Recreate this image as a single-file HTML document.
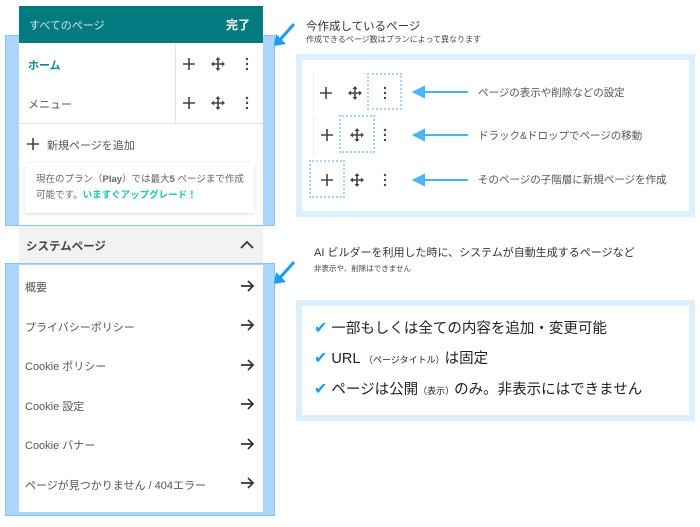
<!DOCTYPE html>
<html><head><meta charset="utf-8"><style>
*{margin:0;padding:0;box-sizing:border-box}
body{width:700px;height:527px;background:#fff;position:relative;overflow:hidden;font-family:"Liberation Sans","Noto Sans CJK JP",sans-serif;color:#444}
.a{position:absolute}
.blue{background:#aad5fc;border:1.5px dotted #6cb4f0}
.row{position:absolute;left:25px;font-size:11px;color:#555}
.note{font-size:10.5px;color:#555}
svg.i{position:absolute}
</style></head><body>
<svg width="0" height="0" style="position:absolute"><defs>
<g id="pl"><path d="M7 1V13M1 7H13" stroke="#444" stroke-width="1.6" fill="none"/></g>
<g id="mv"><path d="M7 1V13M1 7H13" stroke="#444" stroke-width="1.6"/><path d="M7 0L4.5 3H9.5ZM7 14L4.5 11H9.5ZM0 7L3 4.5V9.5ZM14 7L11 4.5V9.5Z" fill="#444"/></g>
<g id="dt"><circle cx="7" cy="2" r="1.2" fill="#444"/><circle cx="7" cy="7" r="1.2" fill="#444"/><circle cx="7" cy="12" r="1.2" fill="#444"/></g>
<g id="ar"><path d="M1 7H13M8 2L13 7L8 12" stroke="#333" stroke-width="1.7" fill="none"/></g>
</defs></svg>
<div class="a blue" style="left:5px;top:35px;width:270px;height:191px"></div>
<div class="a blue" style="left:5px;top:263px;width:270px;height:253px"></div>
<div class="a" style="left:19px;top:6px;width:244px;height:37px;background:#017a80"></div>
<div class="a" style="left:29px;top:17px;font-size:11px;color:#cfe9ea">すべてのページ</div>
<div class="a" style="left:226px;top:16px;font-size:12px;color:#fff;font-weight:bold">完了</div>
<div class="a" style="left:19px;top:43px;width:244px;height:182px;background:#fff"></div>
<div class="a" style="left:175px;top:43px;width:1px;height:80px;background:#e4e4e4"></div>
<div class="a" style="left:19px;top:123px;width:244px;height:1px;background:#e4e4e4"></div>
<div class="a" style="left:28px;top:57px;font-size:11px;color:#0a8c93;font-weight:bold">ホーム</div>
<div class="a" style="left:28px;top:96px;font-size:11px;color:#555">メニュー</div>
<svg class="i" style="left:182px;top:57px" width="14" height="14"><use href="#pl"/></svg>
<svg class="i" style="left:211px;top:57px" width="14" height="14"><use href="#mv"/></svg>
<svg class="i" style="left:240px;top:57px" width="14" height="14"><use href="#dt"/></svg>
<svg class="i" style="left:182px;top:96px" width="14" height="14"><use href="#pl"/></svg>
<svg class="i" style="left:211px;top:96px" width="14" height="14"><use href="#mv"/></svg>
<svg class="i" style="left:240px;top:96px" width="14" height="14"><use href="#dt"/></svg>
<svg class="i" style="left:26px;top:137px" width="14" height="14"><use href="#pl"/></svg>
<div class="a" style="left:47px;top:137px;font-size:11px;color:#555">新規ページを追加</div>
<div class="a" style="left:25px;top:163px;width:229px;height:50px;background:#fff;border-radius:3px;box-shadow:0 1px 4px rgba(0,0,0,.15)"></div>
<div class="a" style="left:36px;top:172px;font-size:9.5px;color:#666;line-height:16px">現在のプラン（<b>Play</b>）では最大<b>5</b> ページまで作成<br>可能です。<b style="color:#1bc9a0">いますぐアップグレード！</b></div>
<div class="a" style="left:19px;top:226px;width:244px;height:37px;background:#f2f2f2"></div>
<div class="a" style="left:26px;top:238px;font-size:11.5px;font-weight:bold;color:#444">システムページ</div>
<svg class="i" style="left:240px;top:240px" width="14" height="10"><path d="M1 8L7 2L13 8" stroke="#333" stroke-width="1.8" fill="none"/></svg>
<div class="a" style="left:19px;top:265px;width:244px;height:247px;background:#fff"></div>
<div class="row" style="top:279px">概要</div><svg class="i" style="left:240px;top:279px" width="14" height="14"><use href="#ar"/></svg>
<div class="row" style="top:319px">プライバシーポリシー</div><svg class="i" style="left:240px;top:318px" width="14" height="14"><use href="#ar"/></svg>
<div class="row" style="top:358px">Cookie ポリシー</div><svg class="i" style="left:240px;top:358px" width="14" height="14"><use href="#ar"/></svg>
<div class="row" style="top:398px">Cookie 設定</div><svg class="i" style="left:240px;top:397px" width="14" height="14"><use href="#ar"/></svg>
<div class="row" style="top:437px">Cookie バナー</div><svg class="i" style="left:240px;top:437px" width="14" height="14"><use href="#ar"/></svg>
<div class="row" style="top:477px">ページが見つかりません / 404エラー</div><svg class="i" style="left:240px;top:476px" width="14" height="14"><use href="#ar"/></svg>
<svg class="a" style="left:272px;top:20px" width="28" height="30"><path d="M22 4 L6 22" stroke="#1a9ef0" stroke-width="3"/><path d="M2 26 L4 14 L14 24 Z" fill="#1a9ef0"/></svg>
<svg class="a" style="left:272px;top:258px" width="28" height="30"><path d="M22 4 L6 22" stroke="#1a9ef0" stroke-width="3"/><path d="M2 26 L4 14 L14 24 Z" fill="#1a9ef0"/></svg>
<div class="a" style="left:306px;top:18px;font-size:11.5px;color:#333">今作成しているページ</div>
<div class="a" style="left:306px;top:34px;font-size:8px;color:#444">作成できるページ数はプランによって異なります</div>
<div class="a" style="left:296px;top:54px;width:399px;height:163px;border:6px solid #ddeeff;background:#fff"></div>
<div class="a" style="left:313px;top:73px;width:1px;height:38px;background:#eee"></div>
<div class="a" style="left:313px;top:117px;width:1px;height:38px;background:#eee"></div>
<svg class="i" style="left:319px;top:86px" width="14" height="14"><use href="#pl"/></svg>
<svg class="i" style="left:348px;top:86px" width="14" height="14"><use href="#mv"/></svg>
<svg class="i" style="left:378px;top:86px" width="14" height="14"><use href="#dt"/></svg>
<div class="a" style="left:367px;top:73px;width:35px;height:37px;border:2px dotted #a8d2fb"></div>
<svg class="i" style="left:320px;top:128px" width="14" height="14"><use href="#pl"/></svg>
<svg class="i" style="left:350px;top:128px" width="14" height="14"><use href="#mv"/></svg>
<svg class="i" style="left:378px;top:128px" width="14" height="14"><use href="#dt"/></svg>
<div class="a" style="left:339px;top:115px;width:36px;height:38px;border:2px dotted #a8d2fb"></div>
<svg class="i" style="left:320px;top:173px" width="14" height="14"><use href="#pl"/></svg>
<svg class="i" style="left:350px;top:173px" width="14" height="14"><use href="#mv"/></svg>
<svg class="i" style="left:378px;top:173px" width="14" height="14"><use href="#dt"/></svg>
<div class="a" style="left:309px;top:160px;width:36px;height:38px;border:2px dotted #a8d2fb"></div>
<svg class="a" style="left:412px;top:85px" width="60" height="110"><g stroke="#4ab5f5" stroke-width="2" fill="#4ab5f5"><line x1="8" y1="7" x2="56" y2="7"/><path d="M2 7 L12 2 L12 12Z"/><line x1="8" y1="50" x2="56" y2="50"/><path d="M2 50 L12 45 L12 55Z"/><line x1="8" y1="95" x2="56" y2="95"/><path d="M2 95 L12 90 L12 100Z"/></g></svg>
<div class="a note" style="left:478px;top:85px">ページの表示や削除などの設定</div>
<div class="a note" style="left:478px;top:128px">ドラック&amp;ドロップでページの移動</div>
<div class="a note" style="left:478px;top:172px">そのページの子階層に新規ページを作成</div>
<div class="a" style="left:314px;top:244px;font-size:11px;color:#333">AI ビルダーを利用した時に、システムが自動生成するページなど</div>
<div class="a" style="left:314px;top:263px;font-size:7.5px;color:#444">非表示や、削除はできません</div>
<div class="a" style="left:296px;top:300px;width:399px;height:121px;border:6px solid #ddeeff;background:#fff"></div>
<div class="a" style="left:314px;top:314px;font-size:14.5px;color:#222;line-height:30px"><span style="color:#1a9ef0;font-size:16px">✔</span> 一部もしくは全ての内容を追加・変更可能<br><span style="color:#1a9ef0;font-size:16px">✔</span> URL <span style="font-size:9px">（ページタイトル）</span>は固定<br><span style="color:#1a9ef0;font-size:16px">✔</span> ページは公開<span style="font-size:9px">（表示）</span>のみ。非表示にはできません</div>
</body></html>
